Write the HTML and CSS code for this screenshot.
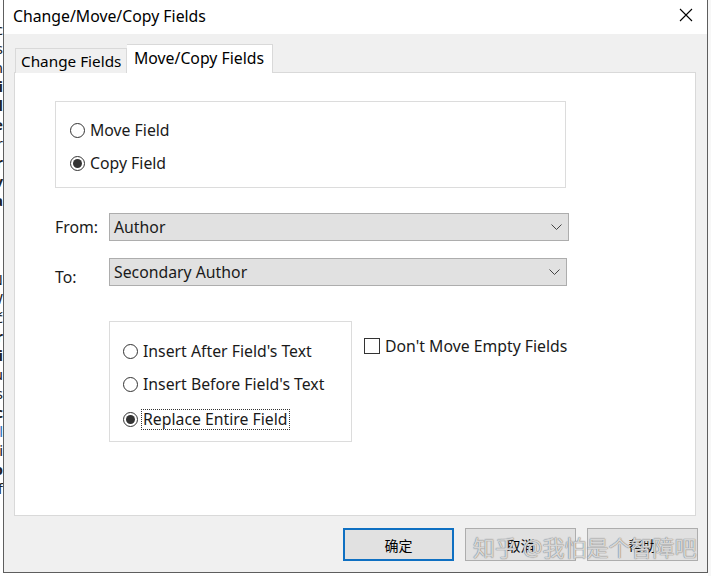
FILE: index.html
```html
<!DOCTYPE html>
<html>
<head>
<meta charset="utf-8">
<link rel="stylesheet" href="styles.css">
</head>
<body>
<div class="desk">
  <div class="strip">
    <span>c</span><span>s</span><span>n</span><b>i</b><b>l</b><b>e</b><span>r</span><b>r</b><b>v</b><b>a</b><span class="gap"></span><span>N</span><span>W</span><span>č</span><b>r</b><b>i</b><span>u</span><span>s</span><b>c</b><span class="blue">l</span><span>i</span><b>p</b><span>f</span>
  </div>
  <div class="dialog">
    <div class="titlebar">
      <span class="title">Change/Move/Copy Fields</span>
      <svg class="close" width="14" height="14" viewBox="0 0 14 14"><path d="M1 1L13 13M13 1L1 13" stroke="#000" stroke-width="1.1" fill="none"/></svg>
    </div>
    <div class="content">
      <div class="tabs">
        <div class="tab">Change Fields</div>
        <div class="tab active">Move/Copy Fields</div>
      </div>
      <div class="panel">
        <div class="group group-mode">
          <label class="opt"><span class="radio"></span>Move Field</label>
          <label class="opt"><span class="radio on"></span>Copy Field</label>
        </div>
        <div class="field from">
          <span class="lbl">From:</span>
          <div class="combo w-from"><span>Author</span><svg class="chev" width="11" height="7" viewBox="0 0 11 7"><path d="M0.5 0.5L5.5 5.5L10.5 0.5" stroke="#444" fill="none"/></svg></div>
        </div>
        <div class="field to">
          <span class="lbl lbl-to">To:</span>
          <div class="combo w-to"><span>Secondary Author</span><svg class="chev" width="11" height="7" viewBox="0 0 11 7"><path d="M0.5 0.5L5.5 5.5L10.5 0.5" stroke="#444" fill="none"/></svg></div>
        </div>
        <div class="lower">
          <div class="group group-ins">
            <label class="opt"><span class="radio"></span>Insert After Field's Text</label>
            <label class="opt"><span class="radio"></span>Insert Before Field's Text</label>
            <label class="opt"><span class="radio on"></span><span class="focus">Replace Entire Field</span></label>
          </div>
          <label class="check"><span class="box"></span>Don't Move Empty Fields</label>
        </div>
      </div>
      <div class="buttons">
        <div class="btn default">确定</div>
        <div class="btn">取消</div>
        <div class="btn">帮助</div>
        <div class="watermark">知乎 @我怕是个智障吧</div>
      </div>
    </div>
  </div>
  <div class="rightstrip"></div>
</div>
</body>
</html>
```
FILE: styles.css
```css
html, body {
  margin: 0;
  padding: 0;
}
body {
  width: 711px;
  height: 576px;
  overflow: hidden;
  background: #ffffff;
  font-family: "Noto Sans", "Noto Sans CJK SC", sans-serif;
  color: #1a1a1a;
}
.desk {
  display: flex;
  height: 576px;
  align-items: flex-start;
}
.strip {
  width: 3px;
  flex: none;
  overflow: hidden;
  display: flex;
  flex-direction: column;
  padding-top: 20px;
  font-size: 15px;
  line-height: 19px;
  color: #222;
  direction: rtl;
}
.strip span, .strip b {
  display: block;
  height: 19px;
}
.strip .gap { height: 60px; }
.strip .blue { color: #2a6fb8; }
.dialog {
  width: 703px;
  height: 572px;
  flex: none;
  border: 1px solid #5e5e5e;
  border-top: none;
  background: #f0f0f0;
  display: flex;
  flex-direction: column;
}
.rightstrip {
  flex: 1;
  height: 576px;
  background: #f7f7f7;
}
.titlebar {
  height: 34px;
  flex: none;
  background: #ffffff;
  display: flex;
  align-items: center;
  justify-content: space-between;
  padding: 0 14px 0 9px;
}
.title {
  font-size: 15.8px;
  color: #000;
  margin-top: -2px;
}
.close {
  margin-top: -4px;
}
.content {
  position: relative;
  padding: 10px 11px 0 10px;
  flex: 1;
  min-height: 0;
}
.tabs {
  display: flex;
  align-items: flex-end;
  height: 29px;
  padding-left: 1px;
  margin-bottom: -1px;
  position: relative;
  z-index: 1;
}
.tab {
  box-sizing: border-box;
  flex: none;
  white-space: nowrap;
  height: 25px;
  width: 112px;
  padding: 0 0 0 5px;
  border: 1px solid #d9d9d9;
  border-bottom: none;
  background: #f0f0f0;
  font-size: 15.3px;
  line-height: 25px;
  color: #000;
}
.tab.active {
  height: 29px;
  line-height: 27px;
  background: #ffffff;
  width: 146px;
  padding: 0 0 0 7px;
  border-left: none;
  font-size: 15.8px;
}
.panel {
  box-sizing: border-box;
  height: 444px;
  background: #ffffff;
  border: 1px solid #d9d9d9;
  padding: 28px 0 0 40px;
  font-size: 15.8px;
  color: #1a1a1a;
}
.group {
  border: 1px solid #dcdcdc;
  box-sizing: border-box;
}
.group-mode {
  width: 511px;
  height: 87px;
  padding: 18px 0 0 14px;
  display: flex;
  flex-direction: column;
  gap: 13px;
}
.opt {
  display: flex;
  align-items: center;
  height: 20px;
  line-height: 20px;
}
.radio {
  width: 13px;
  height: 13px;
  border: 1px solid #333;
  border-radius: 50%;
  margin-right: 5px;
  box-sizing: content-box;
  position: relative;
  flex: none;
}
.radio.on::after {
  content: "";
  position: absolute;
  left: 2px;
  top: 2px;
  width: 9px;
  height: 9px;
  border-radius: 50%;
  background: #333;
}
.field {
  display: flex;
  align-items: center;
}
.from { margin-top: 25px; }
.to { margin-top: 17px; }
.lbl {
  width: 54px;
  flex: none;
}
.lbl-to {
  position: relative;
  top: 5px;
}
.combo {
  height: 26px;
  background: #e1e1e1;
  border: 1px solid #adadad;
  display: flex;
  align-items: center;
  justify-content: space-between;
  padding: 0 5px 0 4px;
  color: #1a1a1a;
}
.combo span { margin-top: -1px; }
.w-from { width: 449px; }
.w-to { width: 447px; }
.chev { margin-right: 1px; }
.lower {
  display: flex;
  align-items: flex-start;
  margin-top: 35px;
  padding-left: 54px;
}
.group-ins {
  width: 243px;
  height: 121px;
  padding: 19px 0 0 13px;
  display: flex;
  flex-direction: column;
  gap: 13px;
}
.group-ins .opt:last-child { margin-top: 2px; }
.focus {
  outline: 1px dotted #333;
  outline-offset: 0;
  padding: 0 1px;
  margin-left: -1px;
  line-height: 19px;
}
.check {
  display: flex;
  align-items: center;
  margin: 15px 0 0 12px;
  height: 20px;
}
.box {
  width: 14px;
  height: 14px;
  border: 1px solid #333;
  margin-right: 5px;
  flex: none;
}
.buttons {
  display: flex;
  justify-content: flex-end;
  gap: 11px;
  padding: 12px 0 0 0;
  margin-right: -2px;
  position: relative;
}
.btn {
  width: 109px;
  height: 31px;
  border: 1px solid #adadad;
  background: #e1e1e1;
  font-size: 14px;
  color: #000;
  display: flex;
  align-items: center;
  justify-content: center;
}
.btn.default {
  width: 107px;
  height: 29px;
  border: 2px solid #0f70c2;
}
.watermark {
  position: absolute;
  left: 459px;
  top: 14px;
  font-size: 22px;
  color: rgba(255, 255, 255, 0.7);
  text-shadow: 0 0 1px #7a7a7a, 0 0 1px #7a7a7a;
  white-space: nowrap;
  pointer-events: none;
}
```
